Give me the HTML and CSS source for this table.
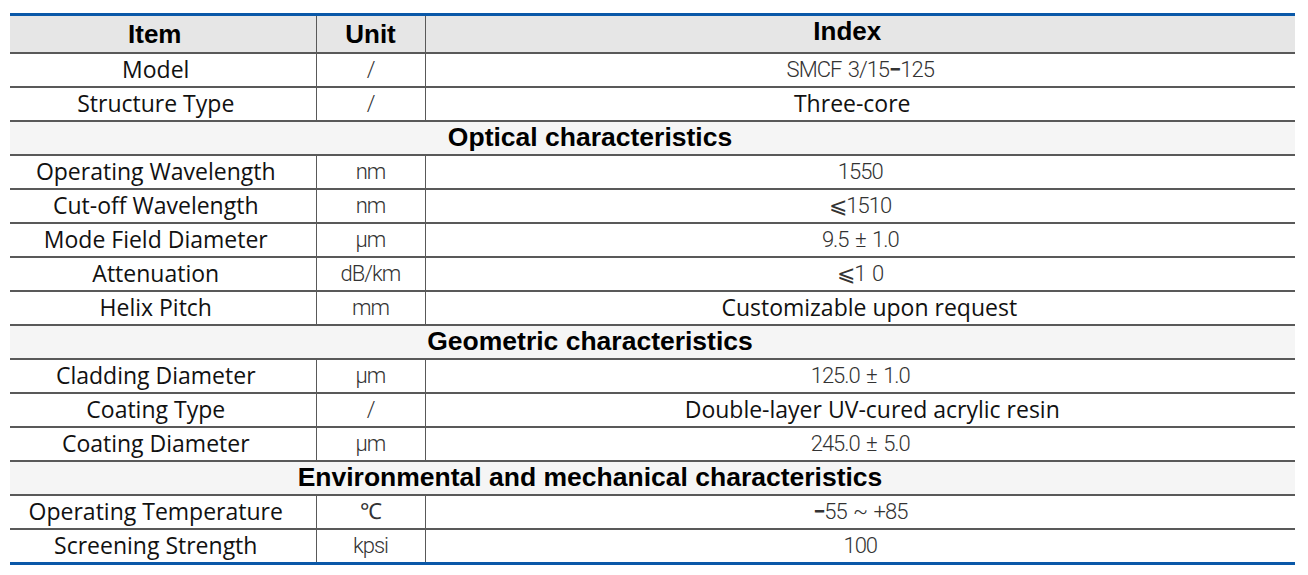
FILE: index.html
```html
<!DOCTYPE html>
<html lang="en">
<head>
<meta charset="utf-8">
<title>SMCF 3/15-125 specification</title>
<link rel="stylesheet" href="styles.css">
</head>
<body>
<table class="spec">
  <colgroup>
    <col class="c-item">
    <col class="c-unit">
    <col class="c-index">
  </colgroup>
  <thead>
    <tr class="head">
      <th class="h-item">Item</th>
      <th class="h-unit">Unit</th>
      <th class="h-index">Index</th>
    </tr>
  </thead>
  <tbody>
    <tr><td class="item">Model</td><td class="unit">/</td><td class="val thin">SMCF 3/15<span class="dash">−</span>125</td></tr>
    <tr><td class="item">Structure Type</td><td class="unit">/</td><td class="val shift-l">Three-core</td></tr>
    <tr class="section"><th colspan="3">Optical characteristics</th></tr>
    <tr><td class="item">Operating Wavelength</td><td class="unit">nm</td><td class="val thin">1550</td></tr>
    <tr><td class="item">Cut-off Wavelength</td><td class="unit">nm</td><td class="val thin">⩽1510</td></tr>
    <tr><td class="item">Mode Field Diameter</td><td class="unit">µm</td><td class="val thin">9.5 ± 1.0</td></tr>
    <tr><td class="item">Attenuation</td><td class="unit">dB/km</td><td class="val thin">⩽1 0</td></tr>
    <tr><td class="item">Helix Pitch</td><td class="unit">mm</td><td class="val shift-r">Customizable upon request</td></tr>
    <tr class="section"><th colspan="3">Geometric characteristics</th></tr>
    <tr><td class="item">Cladding Diameter</td><td class="unit">µm</td><td class="val thin">125.0 ± 1.0</td></tr>
    <tr><td class="item">Coating Type</td><td class="unit">/</td><td class="val shift-rr">Double-layer UV-cured acrylic resin</td></tr>
    <tr><td class="item">Coating Diameter</td><td class="unit">µm</td><td class="val thin">245.0 ± 5.0</td></tr>
    <tr class="section"><th colspan="3">Environmental and mechanical characteristics</th></tr>
    <tr><td class="item">Operating Temperature</td><td class="unit">℃</td><td class="val thin"><span class="dash">−</span>55 ~ +85</td></tr>
    <tr><td class="item">Screening Strength</td><td class="unit">kpsi</td><td class="val thin">100</td></tr>
  </tbody>
</table>
</body>
</html>
```

FILE: styles.css
```css
html, body {
  margin: 0;
  background: #ffffff;
}

body {
  padding: 13px 0 0 10px;
}

.spec {
  width: 1285px;
  table-layout: fixed;
  border-collapse: collapse;
  border-top: 3px solid #0a58a8;
  border-bottom: 3px solid #0a58a8;
}

.c-item { width: 306px; }
.c-unit { width: 109px; }
.c-index { width: 870px; }

.spec th,
.spec td {
  padding: 0;
  text-align: center;
  vertical-align: middle;
  border-top: 2px solid #595959;
  white-space: nowrap;
  line-height: 1.2;
}

.spec tr > * + * {
  border-left: 1px solid #595959;
}

.head th {
  height: 31px;
  border-top: 0;
  background: #e6e6e6;
  font-family: "Liberation Sans", Arial, sans-serif;
  font-weight: bold;
  font-size: 26px;
  color: #000;
}

.head .h-item {
  padding-right: 16px;
}

.head .h-index {
  padding-right: 26px;
  padding-bottom: 5px;
}

.spec tbody td {
  height: 32px;
}

.section th {
  height: 32px;
  background: #f5f5f5;
  font-family: "Liberation Sans", Arial, sans-serif;
  font-weight: bold;
  font-size: 26.5px;
  color: #000;
  padding-right: 125px;
}

.item,
.val {
  font-family: "Open Sans", "Noto Sans", sans-serif;
  font-size: 23px;
  color: #111;
}

.spec .item {
  padding-right: 14px;
}

.unit,
.val.thin {
  font-family: Roboto, "Liberation Sans", sans-serif;
  font-weight: 300;
  font-size: 22px;
  letter-spacing: -1px;
  word-spacing: 2px;
  color: #333;
}

.spec .shift-l { padding-right: 16px; }
.spec .shift-r { padding-left: 18px; }
.spec .shift-rr { padding-left: 24px; }

.dash {
  font-weight: bold;
}
```
